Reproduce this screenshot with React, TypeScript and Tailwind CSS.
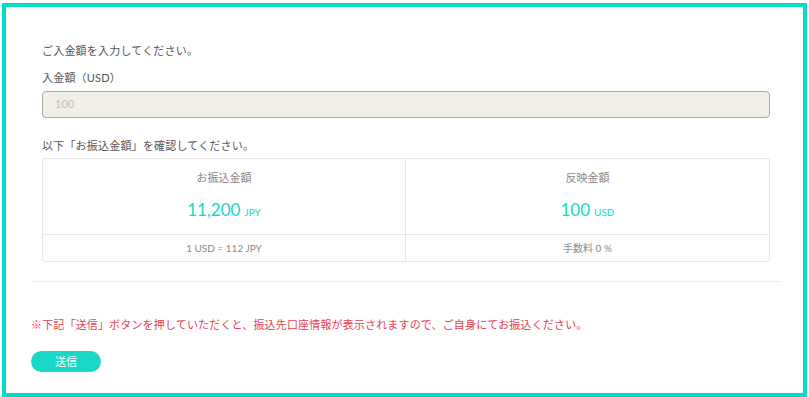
import React from 'react';

const font = { fontFamily: 'Lato, "Noto Sans CJK JP", sans-serif' };

const AmountCell: React.FC<{ label: string; value: string; unit: string; note: React.ReactNode; last?: boolean }> = ({
  label,
  value,
  unit,
  note,
  last,
}) => (
  <div className={`flex flex-col ${last ? '' : 'border-r border-[#e6e6e6]'}`}>
    <div className="flex flex-col items-center pt-[11px] pb-[14px] border-b border-[#e6e6e6]">
      <p className="text-[11px] leading-[16px] text-[#888]">{label}</p>
      <p className="mt-[14px] h-[20px] flex items-baseline gap-[4px] text-[#14d8c5]">
        <span className="text-[17px] leading-[20px]">{value}</span>
        <span className="text-[10px] leading-[20px]">{unit}</span>
      </p>
    </div>
    <p className="py-[6px] text-center text-[10px] leading-[14px] text-[#8a8a8a]">{note}</p>
  </div>
);

export default function App() {
  return (
    <div className="w-[809px] h-[397px] bg-white overflow-hidden" style={font}>
      <div className="mt-[3px] ml-[2px] w-[805px] h-[394px] border-4 border-[#00dcc8] bg-white">
        <div className="ml-[25px] w-[750px] border-t-[3px] border-t-[#f7f7fa] border-b border-b-[#efefef] px-[11px] pt-[33px] pb-[19px]">
          <p className="text-[11px] leading-[16px] tracking-[0.2px] text-[#555]">ご入金額を入力してください。</p>
          <p className="mt-[11px] text-[11px] leading-[16px] tracking-[0.2px] text-[#555]">入金額（USD）</p>
          <div className="mt-[5px] h-[27px] rounded-[4px] border border-[#a9a9a9] bg-[#f2efe9] flex items-center pl-[12px]">
            <span className="text-[11px] text-[#bdbdbd]">100</span>
          </div>
          <p className="mt-[20px] text-[11px] leading-[16px] tracking-[0.2px] text-[#555]">以下「お振込金額」を確認してください。</p>
          <div className="mt-[4px] grid grid-cols-2 rounded-[3px] border border-[#e6e6e6]">
            <AmountCell label="お振込金額" value="11,200" unit="JPY" note="1 USD = 112 JPY" />
            <AmountCell label="反映金額" value="100" unit="USD" note="手数料 0 %" last />
          </div>
        </div>
        <div className="ml-[25px]">
          <p className="mt-[35px] text-[11px] leading-[16px] tracking-[0.16px] text-[#e5404f]">
            ※下記「送信」ボタンを押していただくと、振込先口座情報が表示されますので、ご自身にてお振込ください。
          </p>
          <button className="mt-[18px] w-[70px] h-[21px] rounded-full bg-[#1ad8c6] text-white text-[11px] leading-[21px] flex items-center justify-center">
            送信
          </button>
        </div>
      </div>
    </div>
  );
}
